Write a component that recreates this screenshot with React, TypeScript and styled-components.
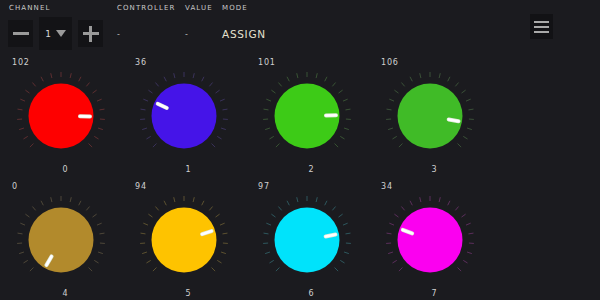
import React from "react";
import styled, { createGlobalStyle } from "styled-components";

const knobs = [
  { value: 102, color: "#fe0000" },
  { value: 36, color: "#4514e8" },
  { value: 101, color: "#3dcb17" },
  { value: 106, color: "#40bb27" },
  { value: 0, color: "#b28a2c" },
  { value: 94, color: "#fec300" },
  { value: 97, color: "#00e3fb" },
  { value: 34, color: "#fb00f0" },
];

const GlobalStyle = createGlobalStyle`
  html, body {
    margin: 0;
    padding: 0;
    background: #1b1b1f;
    width: 600px;
    height: 300px;
    overflow: hidden;
  }
  body {
    font-family: "DejaVu Sans", "Liberation Sans", sans-serif;
    color: #cfcfcf;
  }
`;

const Page = styled.div`
  width: 600px;
  height: 300px;
  background: #1b1b1f;
  position: relative;
`;

const Header = styled.div`
  display: flex;
  align-items: flex-start;
  padding: 3px 0 0 8px;
  height: 57px;
  box-sizing: border-box;
`;

const Group = styled.div<{ $width: number }>`
  width: ${(p) => p.$width}px;
  display: flex;
  flex-direction: column;
`;

const Label = styled.div`
  font-size: 7px;
  letter-spacing: 1.1px;
  line-height: 10px;
  height: 14px;
  padding-left: 1px;
  color: #c9c9c9;
`;

const ChannelRow = styled.div`
  display: flex;
  align-items: center;
  gap: 6px;
`;

const StepButton = styled.div`
  width: 25px;
  height: 27px;
  background: #131316;
  display: flex;
  align-items: center;
  justify-content: center;
  position: relative;
`;

const Bar = styled.span<{ $vertical?: boolean }>`
  position: absolute;
  background: #9a9a9a;
  width: ${(p) => (p.$vertical ? 2.5 : 16)}px;
  height: ${(p) => (p.$vertical ? 16 : 2.5)}px;
`;

const Select = styled.div`
  width: 33px;
  height: 33px;
  background: #131316;
  display: flex;
  align-items: center;
  justify-content: center;
  gap: 5px;
  font-size: 9px;
  color: #d8d8d8;
`;

const Caret = styled.span`
  width: 0;
  height: 0;
  border-left: 5.5px solid transparent;
  border-right: 5.5px solid transparent;
  border-top: 7px solid #9a9a9a;
`;

const Field = styled.div<{ $big?: boolean }>`
  height: 28px;
  margin-top: 3px;
  display: flex;
  align-items: center;
  font-size: ${(p) => (p.$big ? 10.5 : 8)}px;
  letter-spacing: ${(p) => (p.$big ? 0.7 : 0)}px;
  color: ${(p) => (p.$big ? "#e4e0ce" : "#bdbdbd")};
  padding-left: 1px;
`;

const Menu = styled.div`
  position: absolute;
  top: 14px;
  left: 530px;
  width: 23px;
  height: 25px;
  background: #121215;
  display: flex;
  flex-direction: column;
  justify-content: center;
  align-items: center;
  gap: 3px;
`;

const MenuLine = styled.span`
  width: 15px;
  height: 2px;
  background: #a9a9a9;
`;

const Grid = styled.div`
  display: grid;
  grid-template-columns: repeat(4, 123px);
  padding-left: 8px;
  row-gap: 6px;
`;

const Cell = styled.div`
  display: flex;
  flex-direction: column;
`;

const ValueText = styled.div`
  font-size: 8px;
  letter-spacing: 0.8px;
  line-height: 11px;
  height: 11px;
  padding-left: 4px;
  color: #d0d0d0;
`;

const IndexText = styled.div`
  width: 114px;
  text-align: center;
  font-size: 8px;
  line-height: 11px;
  height: 11px;
  color: #d0d0d0;
`;

const KnobSvg = styled.svg`
  display: block;
`;

function Knob({ value, color }: { value: number; color: string }) {
  const cx = 53;
  const cy = 48;
  const angle = (value / 127) * 300 - 150;
  const rad = (a: number) => ((a - 90) * Math.PI) / 180;
  const ticks = Array.from({ length: 21 }, (_, i) => -135 + i * 13.5);
  const a = rad(angle);
  return (
    <KnobSvg width={114} height={96} viewBox="0 0 114 96">
      {ticks.map((t) => {
        const r = rad(t);
        return (
          <g key={t}>
            <line
              x1={cx + Math.cos(r) * 39}
              y1={cy + Math.sin(r) * 39}
              x2={cx + Math.cos(r) * 44}
              y2={cy + Math.sin(r) * 44}
              stroke="#777"
              strokeOpacity={0.3}
              strokeWidth={1}
            />
            <line
              x1={cx + Math.cos(r) * 39}
              y1={cy + Math.sin(r) * 39}
              x2={cx + Math.cos(r) * 44}
              y2={cy + Math.sin(r) * 44}
              stroke={color}
              strokeOpacity={0.18}
              strokeWidth={1}
            />
          </g>
        );
      })}
      <circle cx={cx} cy={cy} r={32.5} fill={color} />
      <line
        x1={cx + Math.cos(a) * 19}
        y1={cy + Math.sin(a) * 19}
        x2={cx + Math.cos(a) * 29}
        y2={cy + Math.sin(a) * 29}
        stroke="#dfe9d8"
        strokeWidth={4}
        strokeLinecap="round"
      />
      <line
        x1={cx + Math.cos(a) * 19}
        y1={cy + Math.sin(a) * 19}
        x2={cx + Math.cos(a) * 29}
        y2={cy + Math.sin(a) * 29}
        stroke="#ffffff"
        strokeWidth={2.6}
        strokeLinecap="round"
      />
    </KnobSvg>
  );
}

export default function App() {
  return (
    <Page>
      <GlobalStyle />
      <Header>
        <Group $width={108}>
          <Label>CHANNEL</Label>
          <ChannelRow>
            <StepButton>
              <Bar />
            </StepButton>
            <Select>
              <span>1</span>
              <Caret />
            </Select>
            <StepButton>
              <Bar />
              <Bar $vertical />
            </StepButton>
          </ChannelRow>
        </Group>
        <Group $width={68}>
          <Label>CONTROLLER</Label>
          <Field>-</Field>
        </Group>
        <Group $width={37}>
          <Label>VALUE</Label>
          <Field>-</Field>
        </Group>
        <Group $width={80}>
          <Label>MODE</Label>
          <Field $big>ASSIGN</Field>
        </Group>
      </Header>
      <Menu>
        <MenuLine />
        <MenuLine />
        <MenuLine />
      </Menu>
      <Grid>
        {knobs.map((k, i) => (
          <Cell key={i}>
            <ValueText>{k.value}</ValueText>
            <Knob value={k.value} color={k.color} />
            <IndexText>{i}</IndexText>
          </Cell>
        ))}
      </Grid>
    </Page>
  );
}
